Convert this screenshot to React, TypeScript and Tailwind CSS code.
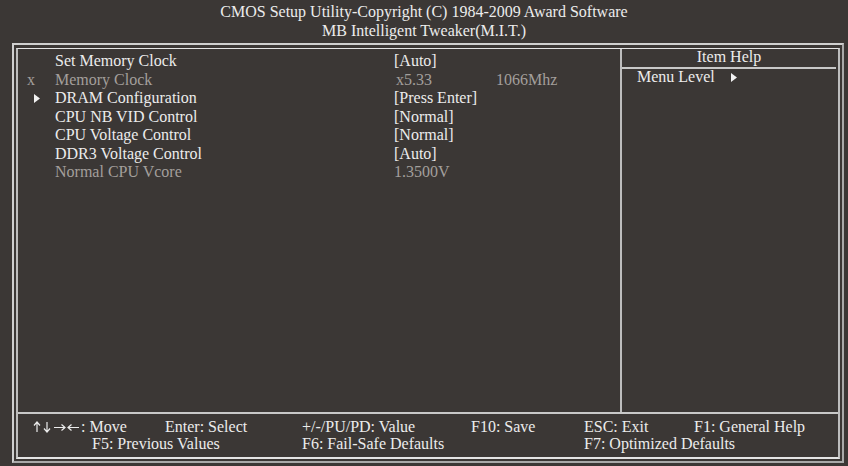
import React from "react";

type Row = {
    label: string;
    value: string;
    extra?: string;
    mark?: "x" | "arrow";
    dim?: boolean;
};

const rows: Row[] = [
    { label: "Set Memory Clock", value: "[Auto]" },
    { label: "Memory Clock", value: "x5.33", extra: "1066Mhz", mark: "x", dim: true },
    { label: "DRAM Configuration", value: "[Press Enter]", mark: "arrow" },
    { label: "CPU NB VID Control", value: "[Normal]" },
    { label: "CPU Voltage Control", value: "[Normal]" },
    { label: "DDR3 Voltage Control", value: "[Auto]" },
    { label: "Normal CPU Vcore", value: "1.3500V", dim: true },
];

function Arrow() {
    return (
        <svg width="6" height="9" viewBox="0 0 6 9" className="inline-block">
            <polygon points="0,0 6,4.5 0,9" fill="#f2f2f2" />
        </svg>
    );
}

// navigation arrows drawn as small line icons
function NavArrows() {
    const s = { stroke: "#ececec", strokeWidth: 1.2, fill: "none" };
    return (
        <span className="inline-flex items-center gap-[2px] mr-[1px] align-[-1px]">
            <svg width="8" height="12" viewBox="0 0 8 12">
                <path d="M4 1 V11 M1 4.5 L4 1 L7 4.5" {...s} />
            </svg>
            <svg width="8" height="12" viewBox="0 0 8 12">
                <path d="M4 1 V11 M1 7.5 L4 11 L7 7.5" {...s} />
            </svg>
            <svg width="13" height="9" viewBox="0 0 13 9">
                <path d="M1 4.5 H12 M8.5 1.5 L12 4.5 L8.5 7.5" {...s} />
            </svg>
            <svg width="13" height="9" viewBox="0 0 13 9" className="-ml-[1px]">
                <path d="M1 4.5 H12 M4.5 1.5 L1 4.5 L4.5 7.5" {...s} />
            </svg>
        </span>
    );
}

export default function App() {
    return (
        <div
            className="w-[848px] h-[466px] bg-[#3b3735] text-[#ececec] text-[16px] overflow-hidden flex flex-col"
            style={{ fontFamily: '"Liberation Serif", "Times New Roman", serif' }}
        >
            {/* header */}
            <div className="h-[43px] pt-[3px] text-center leading-[18.5px]">
                <div>CMOS Setup Utility-Copyright (C) 1984-2009 Award Software</div>
                <div>MB Intelligent Tweaker(M.I.T.)</div>
            </div>

            {/* frame */}
            <div className="ml-[12px] mr-[4px] h-[420px] border-2 border-t-[#cfcfcf] border-l-[#cfcfcf] border-r-[#a9a9a9] border-b-[#a9a9a9] pt-[3px] px-[2px] pb-[2px]">
                <div className="h-full flex flex-col border-x-2 border-t border-b-2 border-x-[#bdbdbd] border-t-[#e4e4e4] border-b-[#e4e4e4]">
                    <div className="h-[363px] flex">
                        {/* items */}
                        <div className="w-[602px] pt-[3px] leading-[18.5px]">
                            {rows.map((r) => (
                                <div
                                    key={r.label}
                                    className={`flex ${r.dim ? "text-[#a39f9c]" : ""}`}
                                >
                                    <span className="w-[37px] pl-[9px] flex items-center">
                                        {r.mark === "x" && <span>x</span>}
                                        {r.mark === "arrow" && (
                                            <span className="pl-[7px] flex items-center">
                                                <Arrow />
                                            </span>
                                        )}
                                    </span>
                                    <span className="w-[339px]">{r.label}</span>
                                    {r.extra ? (
                                        <>
                                            <span className="w-[102px] pl-[2px]">{r.value}</span>
                                            <span>{r.extra}</span>
                                        </>
                                    ) : (
                                        <span>{r.value}</span>
                                    )}
                                </div>
                            ))}
                        </div>

                        <div className="w-[2px] bg-[#bdbdbd]" />

                        {/* item help */}
                        <div className="flex-1 pr-[2px]">
                            <div className="h-[18px] leading-[16px] text-center">Item Help</div>
                            <div className="h-[2px] bg-[#c8c8c8]" />
                            <div className="pl-[15px] leading-[16px] flex items-center">
                                <span>Menu Level</span>
                                <span className="ml-[16px] flex items-center">
                                    <Arrow />
                                </span>
                            </div>
                        </div>
                    </div>

                    <div className="h-[2px] bg-[#c8c8c8]" />

                    {/* footer */}
                    <div className="pt-[4px] leading-[17px]">
                        <div className="flex">
                            <span className="w-[147px] pl-[15px]">
                                <NavArrows />: Move
                            </span>
                            <span className="w-[137px]">Enter: Select</span>
                            <span className="w-[169px]">+/-/PU/PD: Value</span>
                            <span className="w-[113px]">F10: Save</span>
                            <span className="w-[110px]">ESC: Exit</span>
                            <span>F1: General Help</span>
                        </div>
                        <div className="flex">
                            <span className="w-[284px] pl-[74px]">F5: Previous Values</span>
                            <span className="w-[282px]">F6: Fail-Safe Defaults</span>
                            <span>F7: Optimized Defaults</span>
                        </div>
                    </div>
                </div>
            </div>
        </div>
    );
}
